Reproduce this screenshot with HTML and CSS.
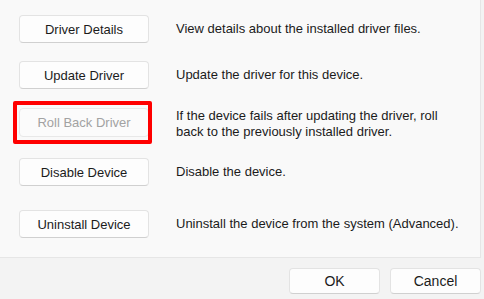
FILE: index.html
```html
<!DOCTYPE html>
<html lang="en">
<head>
    <meta charset="UTF-8">
    <title>Driver</title>
    <link rel="stylesheet" href="styles.css">
</head>
<body>
    <div class="panel">
        <div class="row">
            <button class="btn">Driver Details</button>
            <p class="desc">View details about the installed driver files.</p>
        </div>
        <div class="row">
            <button class="btn">Update Driver</button>
            <p class="desc">Update the driver for this device.</p>
        </div>
        <div class="row row-tall">
            <button class="btn marked" disabled>Roll Back Driver</button>
            <p class="desc">If the device fails after updating the driver, roll back to the previously installed driver.</p>
        </div>
        <div class="row">
            <button class="btn">Disable Device</button>
            <p class="desc">Disable the device.</p>
        </div>
        <div class="row row-last">
            <button class="btn">Uninstall Device</button>
            <p class="desc">Uninstall the device from the system (Advanced).</p>
        </div>
    </div>
    <div class="footer">
        <button class="btn small">OK</button>
        <button class="btn small">Cancel</button>
    </div>
</body>
</html>
```
FILE: styles.css
```css
body {
    margin: 0;
    width: 484px;
    height: 299px;
    background-color: #f3f3f3;
    font-family: "Liberation Sans", Arial, sans-serif;
    font-size: 13px;
    color: #1b1b1b;
    overflow: hidden;
}
.panel {
    width: 480px;
    height: 242px;
    padding-top: 15px;
    background-color: #f9f9f9;
    border-right: 1px solid #e6e6e6;
    border-bottom: 1px solid #e6e6e6;
}
.row {
    display: flex;
    align-items: center;
    height: 28px;
    margin-bottom: 18px;
    padding-left: 19px;
}
.row-tall {
    height: 32px;
    margin-top: 19px;
    align-items: flex-start;
}
.row-tall .btn {
    height: 29px;
}
.row-last {
    margin-top: 24px;
}
.btn {
    position: relative;
    width: 130px;
    height: 28px;
    padding: 0;
    background-color: #fdfdfd;
    border: 1px solid #e3e3e3;
    border-bottom-color: #d0d0d0;
    border-radius: 4px;
    font-family: inherit;
    font-size: 13px;
    color: #1b1b1b;
}
.btn:disabled {
    color: #a2a2a2;
    background-color: #fbfbfb;
    border-color: #e8e8e8;
}
.marked::after {
    content: "";
    position: absolute;
    left: -7px;
    right: -4px;
    top: -8px;
    bottom: -8px;
    border: 4px solid #ff0000;
    border-radius: 2px;
}
.desc {
    margin: 0 0 0 27px;
    line-height: 16px;
    width: 290px;
}
.footer {
    display: flex;
    justify-content: flex-end;
    gap: 10px;
    padding: 10px 3px 0 0;
}
.btn.small {
    width: 91px;
    height: 26px;
    font-size: 14px;
}
```
